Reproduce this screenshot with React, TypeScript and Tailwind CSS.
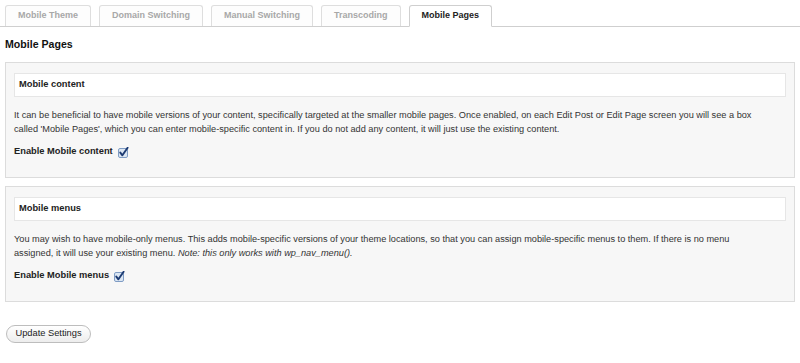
import React from "react";

const Check = () => (
  <svg width="11" height="11" viewBox="0 0 11 11" className="inline-block">
    <rect x="0.5" y="1.5" width="9" height="9" rx="1.5" fill="#dbe6f3" stroke="#7f9cc4" />
    <path d="M2.3 5.6 L4.4 8.3 L9.6 0.8" fill="none" stroke="#1d3b73" strokeWidth="1.9" strokeLinecap="round" strokeLinejoin="round" />
  </svg>
);

const tabs = ["Mobile Theme", "Domain Switching", "Manual Switching", "Transcoding", "Mobile Pages"];

function Panel({ title, children, label }: { title: string; children: React.ReactNode; label: string }) {
  return (
    <section className="mx-[5px] border border-[#dcdcdc] bg-[#f7f7f7] px-[8px] pt-[10px] pb-[18px]">
      <div className="h-[24px] border border-[#e6e6e6] bg-white pl-[4px] flex items-center font-bold text-[9.3px] text-[#222]">
        {title}
      </div>
      <p className="mt-[11px] pr-[30px] text-[9.2px] leading-[14px] text-[#333]">{children}</p>
      <div className="mt-[9px] h-[14px] flex items-center gap-[5px] font-bold text-[9.3px] text-[#222]">
        <span>{label}</span>
        <Check />
      </div>
    </section>
  );
}

export default function App() {
  return (
    <div className="w-[800px] h-[363px] bg-white font-['Liberation_Sans',Arial,sans-serif] text-[#333] overflow-hidden">
      <div className="flex gap-[8px] pl-[5px] pt-[5px] border-b border-[#cfcfcf] pr-[7px]">
        {tabs.map((t, i) => {
          const active = i === tabs.length - 1;
          return (
            <div
              key={t}
              className={
                active
                  ? "h-[22px] -mb-px px-[12px] flex items-center border border-[#cfcfcf] border-b-white bg-white rounded-t-[3px] text-[9px] font-bold text-[#222]"
                  : "h-[21px] px-[12px] flex items-center border border-b-0 border-[#dedede] bg-[#fdfdfd] rounded-t-[3px] text-[9px] font-bold text-[#a8a8a8]"
              }
            >
              {t}
            </div>
          );
        })}
      </div>
      <h2 className="mx-[5px] mt-[9px] text-[10.6px] leading-[16px] font-bold text-[#111]">Mobile Pages</h2>
      <div className="mt-[10px]">
        <Panel title="Mobile content" label="Enable Mobile content">
          It can be beneficial to have mobile versions of your content, specifically targeted at the smaller mobile pages. Once enabled, on each Edit Post or Edit Page screen you will see a box called 'Mobile Pages', which you can enter mobile-specific content in. If you do not add any content, it will just use the existing content.
        </Panel>
      </div>
      <div className="mt-[8px]">
        <Panel title="Mobile menus" label="Enable Mobile menus">
          You may wish to have mobile-only menus. This adds mobile-specific versions of your theme locations, so that you can assign mobile-specific menus to them. If there is no menu assigned, it will use your existing menu. <em>Note: this only works with wp_nav_menu().</em>
        </Panel>
      </div>
      <div className="mx-[6px] mt-[23px]">
        <button className="h-[18px] w-[85px] rounded-full border border-[#bdbdbd] bg-gradient-to-b from-white to-[#ededed] text-[9.3px] text-[#222] flex items-center justify-center">
          Update Settings
        </button>
      </div>
    </div>
  );
}
